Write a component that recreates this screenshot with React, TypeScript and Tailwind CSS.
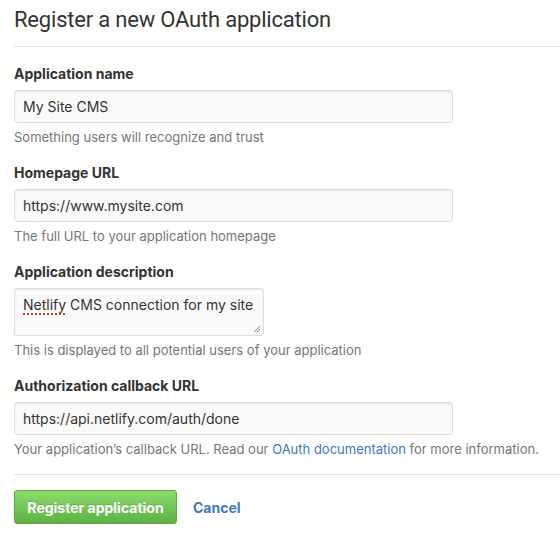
export default function App() {
  const fields = [
    {
      label: 'Application name',
      value: 'My Site CMS',
      help: <>Something users will recognize and trust</>,
    },
    {
      label: 'Homepage URL',
      value: 'https://www.mysite.com',
      help: <>The full URL to your application homepage</>,
    },
  ];

  return (
    <div className="min-h-screen bg-white pl-[14px] text-[#333] font-['Inter','Liberation_Sans',Arial,sans-serif]">
      {/* Heading */}
      <div className="border-b border-[#e5e5e5] pt-[5px] pb-[11px]">
        <h2 className="text-[22px] leading-[30px] tracking-[-0.2px] font-normal text-[#333] font-['Roboto','Liberation_Sans',sans-serif]">
          Register a new OAuth application
        </h2>
      </div>

      <form className="pt-[17px]" onSubmit={(e) => e.preventDefault()}>
        {fields.map((f) => (
          <dl key={f.label} className="mb-[17px]">
            <dt className="text-[14px] leading-[20px] font-bold mb-[6px]">{f.label}</dt>
            <dd>
              <div className="w-[439px] h-[33px] flex items-center px-[8px] bg-[#fafafa] border border-[#ddd] rounded-[3px] shadow-[inset_0_1px_2px_rgba(0,0,0,0.075)] text-[14px]">
                {f.value}
              </div>
              <p className="mt-[5px] text-[13px] leading-[18px] text-[#767676]">{f.help}</p>
            </dd>
          </dl>
        ))}

        {/* Description textarea */}
        <dl className="mb-[17px]">
          <dt className="text-[14px] leading-[20px] font-bold mb-[6px]">Application description</dt>
          <dd>
            <div className="relative w-[250px] h-[48px] px-[8px] pt-[7px] bg-[#fafafa] border border-[#ddd] rounded-[3px] shadow-[inset_0_1px_2px_rgba(0,0,0,0.075)] text-[14px] leading-[18px]">
              <span className="underline decoration-dotted decoration-[#e0301e] decoration-2 underline-offset-[3px]">Netlify</span>{' '}
              CMS connection for my site
              <svg className="absolute right-[2px] bottom-[2px]" width="8" height="8" viewBox="0 0 8 8">
                <path d="M7 1L1 7M7 4L4 7" stroke="#888" strokeWidth="1" />
              </svg>
            </div>
            <p className="mt-[5px] text-[13px] leading-[18px] text-[#767676]">
              This is displayed to all potential users of your application
            </p>
          </dd>
        </dl>

        {/* Callback URL */}
        <dl>
          <dt className="text-[14px] leading-[20px] font-bold mb-[6px]">Authorization callback URL</dt>
          <dd>
            <div className="w-[439px] h-[33px] flex items-center px-[8px] bg-[#fafafa] border border-[#ddd] rounded-[3px] shadow-[inset_0_1px_2px_rgba(0,0,0,0.075)] text-[14px]">
              https://api.netlify.com/auth/done
            </div>
            <p className="mt-[5px] text-[13px] leading-[18px] text-[#767676]">
              Your application’s callback URL. Read our{' '}
              <a href="#" className="text-[#4078c0]">OAuth documentation</a> for more information.
            </p>
          </dd>
        </dl>

        <div className="mt-[16px] border-t border-[#e5e5e5] pt-[15px] flex items-center gap-[16px]">
          <button
            type="submit"
            className="h-[34px] w-[163px] rounded-[3px] border border-[#5ca941] bg-linear-to-b from-[#8add6d] to-[#60b044] text-white text-[14px] font-bold [text-shadow:0_-1px_0_rgba(0,0,0,0.15)]"
          >
            Register application
          </button>
          <a href="#" className="text-[14px] font-bold text-[#4078c0]">Cancel</a>
        </div>
      </form>
    </div>
  );
}
